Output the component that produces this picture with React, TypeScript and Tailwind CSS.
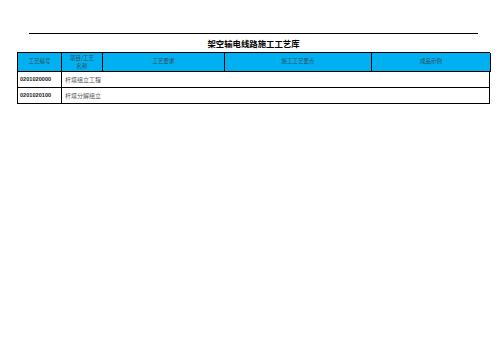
import React from "react";

const cols = ["w-[44px]", "w-[41px]", "w-[122px]", "w-[147px]", "w-[119px]"];

export default function App() {
  const cjk = { fontFamily: '"Noto Sans CJK SC", "Noto Sans", sans-serif' };
  return (
    <div className="w-[503px] h-[356px] bg-white pt-[33px]" style={cjk}>
      <div className="ml-[29px] w-[449px] h-px bg-black" />
      <div className="ml-[17px] w-[473px] h-[18px] flex items-center justify-center pt-[1px]">
        <span className="text-[8.4px] font-bold text-black leading-none tracking-[0px]">架空输电线路施工工艺库</span>
      </div>
      <div className="ml-[17px] w-[473px] border-l border-t border-black">
        <div className="flex h-[19px] bg-[#00b0f0]">
          <div className={`${cols[0]} shrink-0 border-r border-b border-black flex items-center justify-center text-[5.5px] text-[#3a4a5a] leading-none`}>工艺编号</div>
          <div className={`${cols[1]} shrink-0 border-r border-b border-black flex flex-col items-center justify-center text-[5.5px] text-[#3a4a5a] leading-[8.5px]`}>
            <span>项目/工艺</span>
            <span>名称</span>
          </div>
          <div className={`${cols[2]} shrink-0 border-r border-b border-black flex items-center justify-center text-[5.5px] text-[#3a4a5a] leading-none`}>工艺要求</div>
          <div className={`${cols[3]} shrink-0 border-r border-b border-black flex items-center justify-center text-[5.5px] text-[#3a4a5a] leading-none`}>施工工艺要点</div>
          <div className={`${cols[4]} shrink-0 border-r border-b border-black flex items-center justify-center text-[5.5px] text-[#3a4a5a] leading-none`}>成品示例</div>
        </div>
        {[
          ["0201020000", "杆塔组立工程"],
          ["0201020100", "杆塔分解组立"],
        ].map(([code, name]) => (
          <div key={code} className="flex h-[16px]">
            <div className={`${cols[0]} shrink-0 border-r border-b border-black flex items-center pl-[2px] text-[5.6px] font-bold text-[#222] leading-none`} style={{ fontFamily: '"Liberation Sans", Arial, sans-serif' }}>{code}</div>
            <div className="flex-1 border-r border-b border-black flex items-center pl-[3px] text-[6px] text-[#555] leading-none">{name}</div>
          </div>
        ))}
      </div>
    </div>
  );
}
